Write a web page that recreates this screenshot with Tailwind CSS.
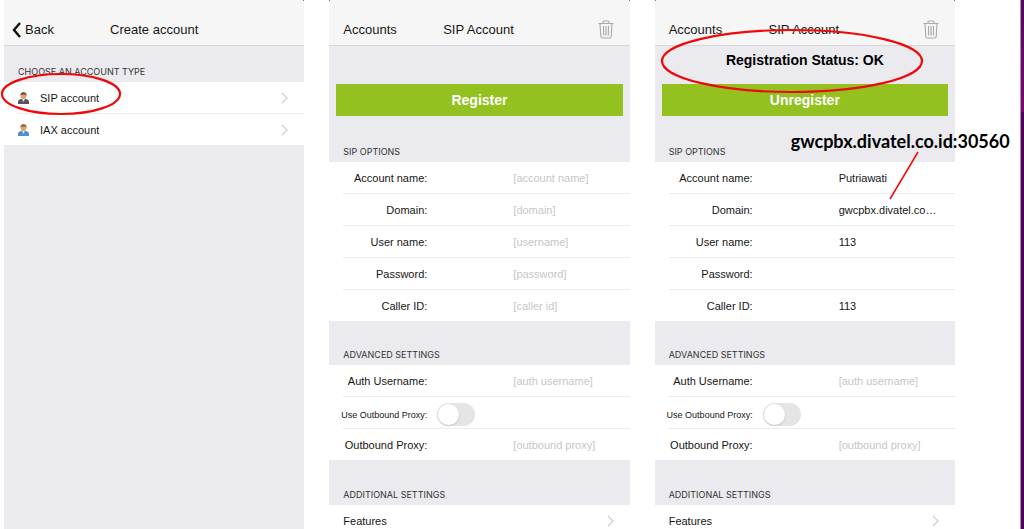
<!DOCTYPE html>
<html lang="en">
<head>
    <meta charset="UTF-8">
    <meta name="viewport" content="width=device-width, initial-scale=1.0">
    <title>SIP account setup</title>
    <script src="https://cdn.jsdelivr.net/npm/@tailwindcss/browser@4"></script>
</head>
<body class="bg-white text-[#161616] font-['Liberation_Sans',Arial,sans-serif] text-[11px] leading-4">
    <svg class="hidden">
        <symbol id="chevron" viewBox="0 0 7 12">
            <path d="M1 1l5 5-5 5" fill="none" stroke="#cfcfd3" stroke-width="1.3"/>
        </symbol>
        <symbol id="trash" viewBox="0 0 16 19">
            <g fill="none" stroke="#a9a9ab" stroke-width="1.1">
                <path d="M.5 3.5h15M5 3.2V2Q5 1 6 1h4q1 0 1 1v1.200M2 3.800l.8 12.700q.1 1.500 1.500 1.500h7.400q1.400 0 1.500-1.500L14 3.800"/>
                <path d="M5.500 6l.2 9.500M8 6v9.500M10.500 6l-.2 9.500"/>
            </g>
        </symbol>
    </svg>

    <div class="flex h-screen overflow-hidden">
        <main class="grid flex-1 grid-cols-3 gap-[25px] pl-1 pr-[65px]">

            <!-- Step 1: account type -->
            <section class="relative bg-[#eaeaef]">
                <header class="grid h-[46px] grid-cols-[1fr_auto_1fr] items-center border-b border-[#d8d8dc] bg-[#f6f6f6] px-2 pt-[14px] text-[13px] after:absolute after:right-0 after:top-0 after:size-px after:bg-[#777]">
                    <button class="flex items-center gap-1">
                        <svg class="h-4 w-[9px]" viewBox="0 0 9 16"><path d="M8 1L2 8l6 7" fill="none" stroke="#111" stroke-width="2.4"/></svg>
                        Back
                    </button>
                    <h1>Create account</h1>
                </header>
                <h2 class="flex h-9 items-end px-[14px] pb-1 font-[Inter,sans-serif] text-[9px] leading-3 text-[#333]">CHOOSE AN ACCOUNT TYPE</h2>
                <div class="bg-white">
                    <a href="#" class="ml-[14px] flex h-8 items-center border-b border-[#ececee] pr-4">
                        <svg class="mr-[11px] h-3 w-[11px]" viewBox="0 0 11 12">
                            <path d="M0 12V10q0-2.500 3-3h5q3 .5 3 3v2z" fill="#55565c"/>
                            <path d="M4 7h3l-1.500 3z" fill="#e8e8ea"/>
                            <circle cx="5.500" cy="4.300" r="2.800" fill="#dfa36c"/>
                            <path d="M2.500 4Q2 .3 5.500.3T8.500 4L7.500 2.600h-4z" fill="#6d4020"/>
                        </svg>
                        <span class="flex-1">SIP account</span>
                        <svg class="h-3 w-[7px]"><use href="#chevron"/></svg>
                    </a>
                    <a href="#" class="ml-[14px] flex h-[31px] items-center pr-4">
                        <svg class="mr-[11px] h-3 w-[11px]" viewBox="0 0 11 12">
                            <path d="M0 12V10q0-2.500 3-3h5q3 .5 3 3v2z" fill="#4f8fcf"/>
                            <path d="M4 7h3l-1.500 3z" fill="#dcecf8"/>
                            <circle cx="5.500" cy="4.300" r="2.800" fill="#dfa36c"/>
                            <path d="M2.500 4Q2 .3 5.500.3T8.500 4L7.500 2.600h-4z" fill="#8a5a2c"/>
                        </svg>
                        <span class="flex-1">IAX account</span>
                        <svg class="h-3 w-[7px]"><use href="#chevron"/></svg>
                    </a>
                </div>
                <svg class="pointer-events-none absolute inset-0 size-full overflow-visible" fill="none" stroke="#f00808" stroke-width="2.2">
                    <ellipse cx="57" cy="94" rx="59" ry="20"/>
                </svg>
            </section>

            <!-- Step 2: empty form -->
            <section class="relative bg-[#eaeaef]">
                <header class="grid h-[46px] grid-cols-[1fr_auto_1fr] items-center border-b border-[#d8d8dc] bg-[#f6f6f6] pl-[14px] pr-4 pt-[14px] text-[13px] before:absolute before:left-0 before:top-0 before:size-px before:bg-[#777] after:absolute after:right-0 after:top-0 after:size-px after:bg-[#777]">
                    <button class="justify-self-start">Accounts</button>
                    <h1>SIP Account</h1>
                    <button class="justify-self-end" aria-label="Delete account"><svg class="h-[19px] w-4"><use href="#trash"/></svg></button>
                </header>
                <form>
                    <div class="px-[7px] pt-[38px]">
                        <button type="button" class="h-8 w-full bg-[#93c120] text-sm font-bold text-white">Register</button>
                    </div>
                    <h2 class="flex h-[46px] items-end px-[14px] pb-1 font-[Inter,sans-serif] text-[9px] leading-3 text-[#333]">SIP OPTIONS</h2>
                    <div class="bg-white">
                        <div class="ml-[14px] flex h-8 items-center border-b border-[#ececee] pr-4">
                            <label for="name-1" class="w-[84px] text-right">Account name:</label>
                            <input id="name-1" placeholder="[account name]" class="ml-[86px] min-w-0 flex-1 placeholder:text-[#c6c6ca]">
                        </div>
                        <div class="ml-[14px] flex h-8 items-center border-b border-[#ececee] pr-4">
                            <label for="domain-1" class="w-[84px] text-right">Domain:</label>
                            <input id="domain-1" placeholder="[domain]" class="ml-[86px] min-w-0 flex-1 placeholder:text-[#c6c6ca]">
                        </div>
                        <div class="ml-[14px] flex h-8 items-center border-b border-[#ececee] pr-4">
                            <label for="user-1" class="w-[84px] text-right">User name:</label>
                            <input id="user-1" placeholder="[username]" class="ml-[86px] min-w-0 flex-1 placeholder:text-[#c6c6ca]">
                        </div>
                        <div class="ml-[14px] flex h-8 items-center border-b border-[#ececee] pr-4">
                            <label for="password-1" class="w-[84px] text-right">Password:</label>
                            <input id="password-1" type="password" placeholder="[password]" class="ml-[86px] min-w-0 flex-1 placeholder:text-[#c6c6ca]">
                        </div>
                        <div class="ml-[14px] flex h-[31px] items-center pr-4">
                            <label for="caller-1" class="w-[84px] text-right">Caller ID:</label>
                            <input id="caller-1" placeholder="[caller id]" class="ml-[86px] min-w-0 flex-1 placeholder:text-[#c6c6ca]">
                        </div>
                    </div>
                    <h2 class="flex h-11 items-end px-[14px] pb-1 font-[Inter,sans-serif] text-[9px] leading-3 text-[#333]">ADVANCED SETTINGS</h2>
                    <div class="bg-white">
                        <div class="ml-[14px] flex h-8 items-center border-b border-[#ececee] pr-4">
                            <label for="auth-1" class="w-[84px] text-right">Auth Username:</label>
                            <input id="auth-1" placeholder="[auth username]" class="ml-[86px] min-w-0 flex-1 placeholder:text-[#c6c6ca]">
                        </div>
                        <div class="ml-[14px] flex h-8 items-center border-b border-[#ececee] pt-1 pr-4">
                            <label for="use-proxy-1" class="-ml-1 w-[88px] whitespace-nowrap text-right text-[9px]">Use Outbound Proxy:</label>
                            <input id="use-proxy-1" type="checkbox" class="ml-[10px] flex h-[23px] w-[38px] appearance-none rounded-full bg-[#e5e5e6] p-px before:size-[21px] before:rounded-full before:bg-white before:shadow checked:justify-end checked:bg-[#93c120]">
                        </div>
                        <div class="ml-[14px] flex h-[31px] items-center pr-4">
                            <label for="proxy-1" class="w-[84px] text-right">Outbound Proxy:</label>
                            <input id="proxy-1" placeholder="[outbound proxy]" class="ml-[86px] min-w-0 flex-1 placeholder:text-[#c6c6ca]">
                        </div>
                    </div>
                    <h2 class="flex h-[45px] items-end px-[14px] pb-1 font-[Inter,sans-serif] text-[9px] leading-3 text-[#333]">ADDITIONAL SETTINGS</h2>
                    <div class="bg-white">
                        <a href="#" class="ml-[14px] flex h-8 items-center border-b border-[#ececee] pr-4">
                            <span class="flex-1">Features</span>
                            <svg class="h-3 w-[7px]"><use href="#chevron"/></svg>
                        </a>
                    </div>
                </form>
            </section>

            <!-- Step 3: registered account -->
            <section class="relative bg-[#eaeaef]">
                <header class="grid h-[46px] grid-cols-[1fr_auto_1fr] items-center border-b border-[#d8d8dc] bg-[#f6f6f6] pl-[14px] pr-4 pt-[14px] text-[13px] before:absolute before:left-0 before:top-0 before:size-px before:bg-[#777] after:absolute after:right-0 after:top-0 after:size-px after:bg-[#777]">
                    <button class="justify-self-start">Accounts</button>
                    <h1>SIP Account</h1>
                    <button class="justify-self-end" aria-label="Delete account"><svg class="h-[19px] w-4"><use href="#trash"/></svg></button>
                </header>
                <form>
                    <div class="px-[7px]">
                        <p class="h-[38px] pt-1 text-center text-sm font-bold text-black">Registration Status: OK</p>
                        <button type="button" class="h-8 w-full bg-[#93c120] text-sm font-bold text-white">Unregister</button>
                    </div>
                    <h2 class="flex h-[46px] items-end px-[14px] pb-1 font-[Inter,sans-serif] text-[9px] leading-3 text-[#333]">SIP OPTIONS</h2>
                    <div class="bg-white">
                        <div class="ml-[14px] flex h-8 items-center border-b border-[#ececee] pr-4">
                            <label for="name-2" class="w-[84px] text-right">Account name:</label>
                            <input id="name-2" value="Putriawati" class="ml-[86px] min-w-0 flex-1">
                        </div>
                        <div class="ml-[14px] flex h-8 items-center border-b border-[#ececee] pr-4">
                            <label for="domain-2" class="w-[84px] text-right">Domain:</label>
                            <input id="domain-2" value="gwcpbx.divatel.co.id:30560" class="ml-[86px] min-w-0 flex-1 text-ellipsis">
                        </div>
                        <div class="ml-[14px] flex h-8 items-center border-b border-[#ececee] pr-4">
                            <label for="user-2" class="w-[84px] text-right">User name:</label>
                            <input id="user-2" value="113" class="ml-[86px] min-w-0 flex-1">
                        </div>
                        <div class="ml-[14px] flex h-8 items-center border-b border-[#ececee] pr-4">
                            <label for="password-2" class="w-[84px] text-right">Password:</label>
                            <input id="password-2" type="password" class="ml-[86px] min-w-0 flex-1">
                        </div>
                        <div class="ml-[14px] flex h-[31px] items-center pr-4">
                            <label for="caller-2" class="w-[84px] text-right">Caller ID:</label>
                            <input id="caller-2" value="113" class="ml-[86px] min-w-0 flex-1">
                        </div>
                    </div>
                    <h2 class="flex h-11 items-end px-[14px] pb-1 font-[Inter,sans-serif] text-[9px] leading-3 text-[#333]">ADVANCED SETTINGS</h2>
                    <div class="bg-white">
                        <div class="ml-[14px] flex h-8 items-center border-b border-[#ececee] pr-4">
                            <label for="auth-2" class="w-[84px] text-right">Auth Username:</label>
                            <input id="auth-2" placeholder="[auth username]" class="ml-[86px] min-w-0 flex-1 placeholder:text-[#c6c6ca]">
                        </div>
                        <div class="ml-[14px] flex h-8 items-center border-b border-[#ececee] pt-1 pr-4">
                            <label for="use-proxy-2" class="-ml-1 w-[88px] whitespace-nowrap text-right text-[9px]">Use Outbound Proxy:</label>
                            <input id="use-proxy-2" type="checkbox" class="ml-[10px] flex h-[23px] w-[38px] appearance-none rounded-full bg-[#e5e5e6] p-px before:size-[21px] before:rounded-full before:bg-white before:shadow checked:justify-end checked:bg-[#93c120]">
                        </div>
                        <div class="ml-[14px] flex h-[31px] items-center pr-4">
                            <label for="proxy-2" class="w-[84px] text-right">Outbound Proxy:</label>
                            <input id="proxy-2" placeholder="[outbound proxy]" class="ml-[86px] min-w-0 flex-1 placeholder:text-[#c6c6ca]">
                        </div>
                    </div>
                    <h2 class="flex h-[45px] items-end px-[14px] pb-1 font-[Inter,sans-serif] text-[9px] leading-3 text-[#333]">ADDITIONAL SETTINGS</h2>
                    <div class="bg-white">
                        <a href="#" class="ml-[14px] flex h-8 items-center border-b border-[#ececee] pr-4">
                            <span class="flex-1">Features</span>
                            <svg class="h-3 w-[7px]"><use href="#chevron"/></svg>
                        </a>
                    </div>
                </form>
                <!-- Callouts -->
                <svg class="pointer-events-none absolute inset-0 size-full overflow-visible" fill="none" stroke="#f00808" stroke-width="2.2">
                    <ellipse cx="137" cy="61" rx="130" ry="31"/>
                    <path d="M263 152l-28 47" stroke-width="1.500"/>
                </svg>
                <p class="absolute left-[136px] top-[129px] whitespace-nowrap font-[Lato,sans-serif] text-lg leading-6 font-bold text-black">gwcpbx.divatel.co.id:30560</p>
            </section>
        </main>
        <div class="flex w-1 flex-col border-l border-[#b48fb8]">
            <div class="h-28 bg-linear-to-b from-[#4f0a56] to-[#790a6c]"></div>
            <div class="flex-1 bg-[#4d0455]"></div>
        </div>
    </div>
</body>
</html>
